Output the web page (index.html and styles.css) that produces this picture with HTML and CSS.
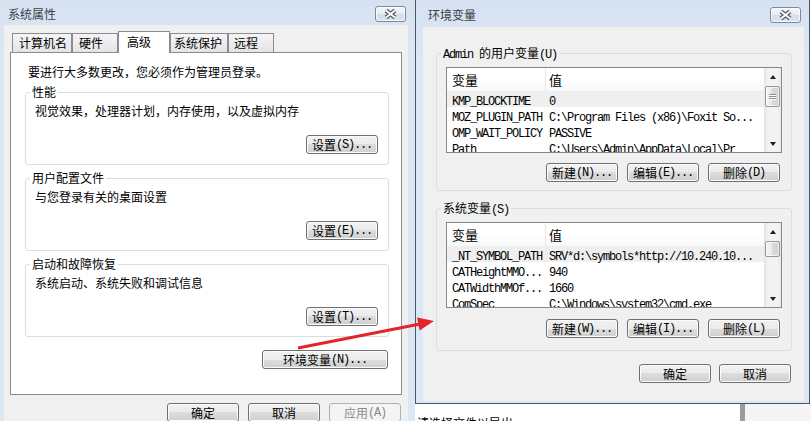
FILE: index.html
```html
<!DOCTYPE html>
<html lang="zh-CN">
<head>
    <meta charset="UTF-8">
    <meta name="viewport" content="width=device-width, initial-scale=1.0">
    <title>系统属性 - 环境变量</title>
    <link rel="stylesheet" href="styles.css">
</head>
<body>

<!-- whatever is behind the two dialogs -->
<div class="behind">
    <div class="behind-text">请选择文件以导出</div>
    <div class="behind-bar"></div>
    <div class="behind-side"></div>
</div>

<div class="win win-sys">
    <div class="titlebar">
        <span class="title">系统属性</span>
        <span class="close">
            <svg width="29" height="14" viewBox="0 0 29 14">
                <path d="M10 3.5l9 7M19 3.5l-9 7" stroke="#505a68" stroke-width="4.4"/>
                <path d="M10 3.5l9 7M19 3.5l-9 7" stroke="#fff" stroke-width="2"/>
            </svg>
        </span>
    </div>
    <div class="client">
        <div class="tabs">
            <div class="tab t1">计算机名</div>
            <div class="tab t2">硬件</div>
            <div class="tab t3 active">高级</div>
            <div class="tab t4">系统保护</div>
            <div class="tab t5">远程</div>
        </div>
        <div class="panel">
            <p class="note">要进行大多数更改，您必须作为管理员登录。</p>

            <fieldset class="group">
                <legend>性能</legend>
                <p>视觉效果，处理器计划，内存使用，以及虚拟内存</p>
                <div class="actions"><button class="btn">设置<span class="mn">(S)...</span></button></div>
            </fieldset>

            <fieldset class="group">
                <legend>用户配置文件</legend>
                <p>与您登录有关的桌面设置</p>
                <div class="actions"><button class="btn">设置<span class="mn">(E)...</span></button></div>
            </fieldset>

            <fieldset class="group">
                <legend>启动和故障恢复</legend>
                <p>系统启动、系统失败和调试信息</p>
                <div class="actions"><button class="btn">设置<span class="mn">(T)...</span></button></div>
            </fieldset>

            <div class="actions env-row"><button class="btn wide">环境变量<span class="mn">(N)...</span></button></div>
        </div>
        <div class="actions dlg-buttons">
            <button class="btn">确定</button>
            <button class="btn">取消</button>
            <button class="btn" disabled>应用<span class="mn">(A)</span></button>
        </div>
    </div>
</div>

<div class="win win-env">
    <div class="titlebar">
        <span class="title">环境变量</span>
        <span class="close">
            <svg width="29" height="14" viewBox="0 0 29 14">
                <path d="M10 3.5l9 7M19 3.5l-9 7" stroke="#505a68" stroke-width="4.4"/>
                <path d="M10 3.5l9 7M19 3.5l-9 7" stroke="#fff" stroke-width="2"/>
            </svg>
        </span>
    </div>
    <div class="client">
        <fieldset class="group vars user">
            <legend><span class="mn">Admin </span>的用户变量<span class="mn">(U)</span></legend>
            <div class="list">
                <div class="list-main">
                    <div class="list-head"><div class="c1">变量</div><div class="c2">值</div></div>
                    <div class="rows">
                        <div class="row sel"><div class="c1">KMP_BLOCKTIME</div><div class="c2">0</div></div>
                        <div class="row"><div class="c1">MOZ_PLUGIN_PATH</div><div class="c2">C:\Program Files (x86)\Foxit So...</div></div>
                        <div class="row"><div class="c1">OMP_WAIT_POLICY</div><div class="c2">PASSIVE</div></div>
                        <div class="row"><div class="c1">Path</div><div class="c2">C:\Users\Admin\AppData\Local\Pr</div></div>
                    </div>
                </div>
                <div class="sbar">
                    <div class="sb-btn"><span class="tri up"></span></div>
                    <div class="sb-track"><div class="sb-thumb grip"><i></i><i></i><i></i></div></div>
                    <div class="sb-btn"><span class="tri down"></span></div>
                </div>
            </div>
            <div class="actions">
                <button class="btn">新建<span class="mn">(N)...</span></button>
                <button class="btn">编辑<span class="mn">(E)...</span></button>
                <button class="btn">删除<span class="mn">(D)</span></button>
            </div>
        </fieldset>

        <fieldset class="group vars sys">
            <legend>系统变量<span class="mn">(S)</span></legend>
            <div class="list">
                <div class="list-main">
                    <div class="list-head"><div class="c1">变量</div><div class="c2">值</div></div>
                    <div class="rows">
                        <div class="row sel"><div class="c1">_NT_SYMBOL_PATH</div><div class="c2">SRV*d:\symbols*http://10.240.10...</div></div>
                        <div class="row"><div class="c1">CATHeightMMO...</div><div class="c2">940</div></div>
                        <div class="row"><div class="c1">CATWidthMMOf...</div><div class="c2">1660</div></div>
                        <div class="row"><div class="c1">ComSpec</div><div class="c2">C:\Windows\system32\cmd.exe</div></div>
                    </div>
                </div>
                <div class="sbar">
                    <div class="sb-btn"><span class="tri up"></span></div>
                    <div class="sb-track"><div class="sb-thumb"></div></div>
                    <div class="sb-btn"><span class="tri down"></span></div>
                </div>
            </div>
            <div class="actions">
                <button class="btn">新建<span class="mn">(W)...</span></button>
                <button class="btn">编辑<span class="mn">(I)...</span></button>
                <button class="btn">删除<span class="mn">(L)</span></button>
            </div>
        </fieldset>

        <div class="actions ok-row">
            <button class="btn">确定</button>
            <button class="btn">取消</button>
        </div>
    </div>
</div>

<!-- red annotation arrow drawn over both dialogs -->
<svg class="arrow" width="811" height="421" viewBox="0 0 811 421">
    <line x1="298" y1="348" x2="420" y2="324" stroke="#e3242b" stroke-width="3"/>
    <polygon points="434,321 417,317.5 419.6,330.5" fill="#e3242b"/>
</svg>

</body>
</html>
```

FILE: styles.css
```css
* {
    box-sizing: border-box;
}

body {
    margin: 0;
    width: 811px;
    height: 421px;
    position: relative;
    overflow: hidden;
    background: #fff;
    font-family: "Noto Sans CJK SC", sans-serif;
    font-size: 12px;
    color: #000;
}

/* SimSun-like latin bits: mnemonics, list values */
.mn, .row {
    font-family: "Liberation Mono", monospace;
    font-size: 12px;
    letter-spacing: -1.2px;
}

/* ---------- windows ---------- */
.win {
    position: absolute;
    top: 0;
    background: linear-gradient(#d6e2f1, #dbe7f5 60px, #dbe7f5);
}

.win-sys {
    left: 0;
    width: 415px;
    height: 421px;
    padding: 0 7px 0 4px;
}

.win-env {
    left: 415px;
    width: 395px;
    height: 404px;
    border: 1px solid #4f5660;
    border-top: 0;
    padding: 0 5px 2px 7px;
    z-index: 2;
}

.titlebar {
    display: flex;
    justify-content: space-between;
    align-items: flex-start;
}

.win-sys .titlebar {
    height: 25px;
    padding: 6px 2px 0 4px;
}

.win-env .titlebar {
    height: 27px;
    padding: 7px 3px 0 5px;
}

.title {
    line-height: 16px;
    color: #3a3f46;
}

.close {
    display: block;
    width: 31px;
    height: 16px;
    border: 1px solid #7d8999;
    border-radius: 3px;
    background: linear-gradient(#f5f8fb, #e4ebf3 50%, #d5dfea 50%, #dbe4ee);
    box-shadow: inset 0 0 0 1px rgba(255, 255, 255, 0.7);
}

.close svg {
    display: block;
}

.client {
    background: #f0f0f0;
}

.win-sys .client {
    height: 396px;
    padding: 6px 6px 0;
}

.win-env .client {
    height: 374px;
    padding: 19px 12px 0 13px;
}

/* ---------- tabs ---------- */
.tabs {
    display: flex;
    align-items: flex-end;
    height: 22px;
    margin: 0 0 -1px 2px;
    position: relative;
    z-index: 1;
}

.tab {
    height: 19px;
    margin-bottom: 1px;
    border: 1px solid #898c95;
    border-bottom: 0;
    background: linear-gradient(#f5f5f5, #e4e4e4);
    padding: 1px 0 0 5px;
    line-height: 16px;
    white-space: nowrap;
}

.t1 { width: 60px; padding-left: 6px; }
.t2 { width: 46px; padding-left: 6px; }
.t3 { width: 52px; }
.t4 { width: 58px; padding-left: 3px; }
.t5 { width: 46px; }

.tab.active {
    height: 22px;
    margin-bottom: 0;
    background: #fff;
    padding: 2px 0 0 8px;
}

.panel {
    height: 343px;
    border: 1px solid #898c95;
    background: #fff;
    padding: 11px 12px 0 14px;
}

.note {
    margin: 0 0 5px 3px;
    line-height: 16px;
}

/* ---------- group boxes ---------- */
.group {
    margin: 0;
    min-width: 0;
    border: 1px solid #d5dfe5;
    border-radius: 3px;
    padding: 4px 10px 10px 9px;
}

.group + .group {
    margin-top: 6px;
}

.group legend {
    height: 14px;
    padding: 0 2px;
    margin-left: -5px;
    line-height: 14px;
    white-space: nowrap;
}

.group p {
    margin: 0;
    line-height: 16px;
}

.actions {
    display: flex;
    justify-content: flex-end;
    gap: 9px;
}

.group .actions {
    margin-top: 16px;
}

.env-row {
    margin-top: 13px;
    padding-right: 1px;
}

.dlg-buttons {
    margin-top: 8px;
    padding-right: 1px;
}

/* ---------- buttons ---------- */
.btn {
    width: 72px;
    height: 19px;
    padding: 0;
    display: flex;
    align-items: center;
    justify-content: center;
    font-family: "Noto Sans CJK SC", sans-serif;
    font-size: 12px;
    line-height: 1;
    color: #000;
    border: 1px solid #707070;
    border-radius: 3px;
    background: linear-gradient(#f2f2f2, #ebebeb 50%, #dddddd 50%, #cfcfcf);
    box-shadow: inset 0 0 0 1px #fbfbfb;
}

.btn.wide {
    width: 126px;
}

.btn:disabled {
    color: #8a8a8a;
    border-color: #adb2b5;
    background: #f4f4f4;
    box-shadow: none;
}

/* ---------- env vars groups ---------- */
.vars {
    padding: 7px 9px 12px 9px;
}

.vars.user {
    padding-bottom: 8px;
}

.vars.sys {
    margin-top: 10px;
}

.vars .actions {
    margin-top: 10px;
    padding-right: 2px;
}

.vars.sys .actions {
    margin-top: 11px;
}

.ok-row {
    margin-top: 13px;
    padding-right: 1px;
    gap: 8px;
}

/* ---------- list view ---------- */
.list {
    display: flex;
    height: 86px;
    border: 1px solid #828790;
    background: #fff;
    overflow: hidden;
}

.list-main {
    flex: 1;
    min-width: 0;
    overflow: hidden;
}

.list-head {
    display: flex;
    height: 23px;
    line-height: 23px;
    font-size: 13px;
    background: linear-gradient(#fff, #fff 50%, #f7f8f9);
}

.list-head .c1 {
    border-right: 1px solid #e3e6ea;
}

.row {
    display: flex;
    height: 16px;
    line-height: 22px;
    white-space: nowrap;
}

.row.sel {
    background: #efefef;
}

.c1 {
    width: 99px;
    flex: none;
    padding-left: 5px;
}

.c2 {
    flex: 1;
    padding-left: 3px;
}

/* ---------- scrollbar ---------- */
.sbar {
    width: 17px;
    display: flex;
    flex-direction: column;
    background: linear-gradient(90deg, #e4e4e4, #f3f3f3 25%, #f3f3f3 75%, #ebebeb);
}

.sb-btn {
    height: 17px;
    display: flex;
    align-items: center;
    justify-content: center;
}

.tri {
    width: 0;
    height: 0;
    border-left: 3.5px solid transparent;
    border-right: 3.5px solid transparent;
}

.tri.up {
    border-bottom: 4px solid #1e1e1e;
}

.tri.down {
    border-top: 4px solid #1e1e1e;
}

.sb-track {
    flex: 1;
}

.sb-thumb {
    margin: 1px 0 0 1px;
    width: 15px;
    height: 16px;
    border: 1px solid #979797;
    border-radius: 2px;
    background: linear-gradient(90deg, #f4f4f4, #e8e8e8 50%, #d9d9d9 50%, #d3d3d3);
    box-shadow: inset 0 0 0 1px rgba(255, 255, 255, 0.6);
}

.sb-thumb.grip {
    height: 21px;
    display: flex;
    flex-direction: column;
    align-items: center;
    justify-content: center;
    gap: 1px;
}

.sb-thumb.grip i {
    display: block;
    width: 7px;
    height: 1px;
    background: #8a8a8a;
    box-shadow: 0 1px 0 #fff;
}

/* ---------- behind the dialogs ---------- */
.behind {
    position: absolute;
    left: 416px;
    top: 404px;
    width: 395px;
    height: 17px;
    display: flex;
}

.behind-text {
    width: 324px;
    padding: 11px 0 0 1px;
    line-height: 16px;
    white-space: nowrap;
    overflow: hidden;
}

.behind-bar {
    width: 5px;
    background: #9c9c9c;
}

.behind-side {
    flex: 1;
    background: #f5f5f5;
}

.arrow {
    position: absolute;
    left: 0;
    top: 0;
    z-index: 5;
    pointer-events: none;
}
```
